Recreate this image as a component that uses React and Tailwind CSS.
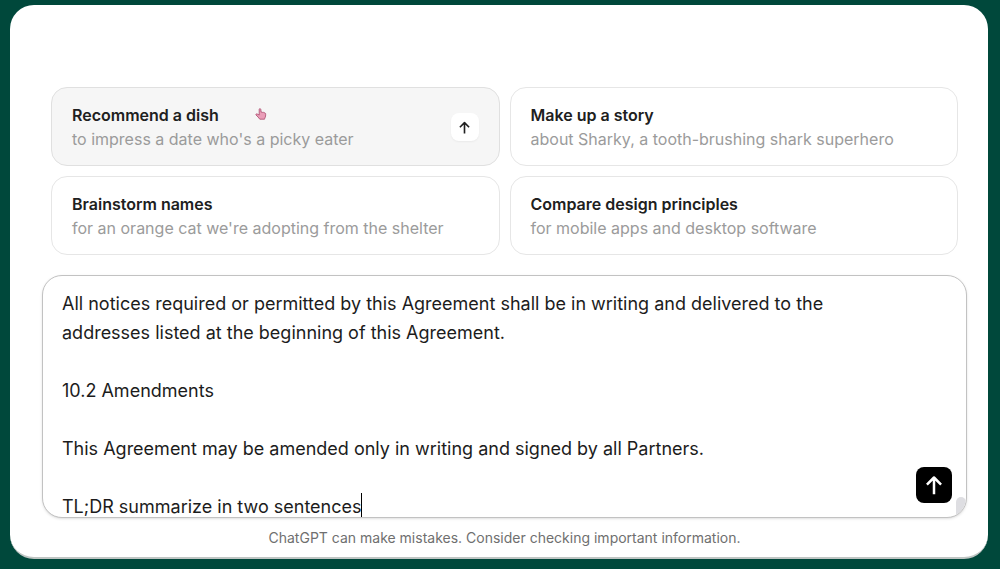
import React from 'react';

const suggestions = [
  { title: 'Recommend a dish', detail: "to impress a date who's a picky eater", active: true },
  { title: 'Make up a story', detail: 'about Sharky, a tooth-brushing shark superhero' },
  { title: 'Brainstorm names', detail: "for an orange cat we're adopting from the shelter" },
  { title: 'Compare design principles', detail: 'for mobile apps and desktop software' },
];

const draft = `All notices required or permitted by this Agreement shall be in writing and delivered to the addresses listed at the beginning of this Agreement.

10.2 Amendments

This Agreement may be amended only in writing and signed by all Partners.

TL;DR summarize in two sentences`;

const ArrowUp = ({ className }) => (
  <svg viewBox="0 0 24 24" fill="none" stroke="currentColor" strokeWidth="3" className={className} aria-hidden>
    <path d="M12 23V3M3.500 11.500 12 3l8.500 8.500" strokeLinejoin="round" />
  </svg>
);

const HandPointer = () => (
  <svg viewBox="0 0 12 12" className="pointer-events-none absolute top-5 left-[203px] size-3" aria-hidden>
    <path
      d="M4.2 7V1.4c0-1 1.5-1 1.6 0l.3 2.8c.4-.4 1.3-.3 1.5.2.5-.3 1.2-.1 1.4.4.7-.2 1.5.1 1.6.8.2 1.7 0 3.2-.8 4.6l-.3 1H4.8C3.9 9.7 2.2 8.1 1 7c-.5-.8.5-1.4 1.2-1z"
      fill="#ea9db8"
      stroke="#a9496c"
      strokeWidth="0.8"
      strokeLinejoin="round"
    />
  </svg>
);

const Suggestion = ({ title, detail, active }) => (
  <button
    type="button"
    className={`relative flex items-center justify-between rounded-2xl border px-5 pt-[15px] pb-[14px] text-left ${
      active ? 'border-[#e0e0e0] bg-[#f6f6f6]' : 'border-[#e6e6e6] bg-white'
    }`}
  >
    <span className="flex flex-col text-base leading-6">
      <span className="font-semibold text-[#202020]">{title}</span>
      <span className="text-[#9b9b9b]">{detail}</span>
    </span>
    {active ? (
      <>
        <span className="flex size-7 items-center justify-center rounded-lg bg-white text-[#202020] shadow-xs">
          <ArrowUp className="size-[13px]" />
        </span>
        <HandPointer />
      </>
    ) : null}
  </button>
);

const Composer = () => (
  <form className="relative mt-5 overflow-hidden rounded-[20px] border border-[#c2c2c2] bg-white shadow-sm">
    <label htmlFor="prompt" className="sr-only">
      Message
    </label>
    <textarea
      id="prompt"
      rows={8}
      defaultValue={draft}
      className="-mb-1 block w-full resize-none overflow-hidden pt-[13px] pr-16 pl-[19px] text-lg leading-[29px] text-[#1c1c1c] outline-none"
    />
    <span className="absolute bottom-0 left-[318px] h-6 w-px bg-black" aria-hidden />
    <button
      type="submit"
      aria-label="Send message"
      className="absolute right-[14px] bottom-[14px] flex size-9 items-center justify-center rounded-lg bg-black text-white"
    >
      <ArrowUp className="size-5" />
    </button>
    <span className="absolute right-0 bottom-0 h-5 w-[10px] rounded-t-full bg-[#dedee2]" aria-hidden />
  </form>
);

const App = () => (
  <div className="flex min-h-screen flex-col bg-[#00483b] pt-[5px] pr-3 pb-[10px] pl-[10px] font-['Inter',sans-serif]">
    <main className="flex-1 rounded-3xl border-b-2 border-[#bfc5c3] bg-white pt-[82px] pr-[21px] pb-2 pl-8">
      <section className="grid grid-cols-2 gap-[10px] px-[9px]" aria-label="Suggestions">
        {suggestions.map((item) => (
          <Suggestion key={item.title} {...item} />
        ))}
      </section>
      <Composer />
      <p className="mt-[10px] text-center text-sm text-[#6f6f6f]">
        ChatGPT can make mistakes. Consider checking important information.
      </p>
    </main>
  </div>
);

export default App;
